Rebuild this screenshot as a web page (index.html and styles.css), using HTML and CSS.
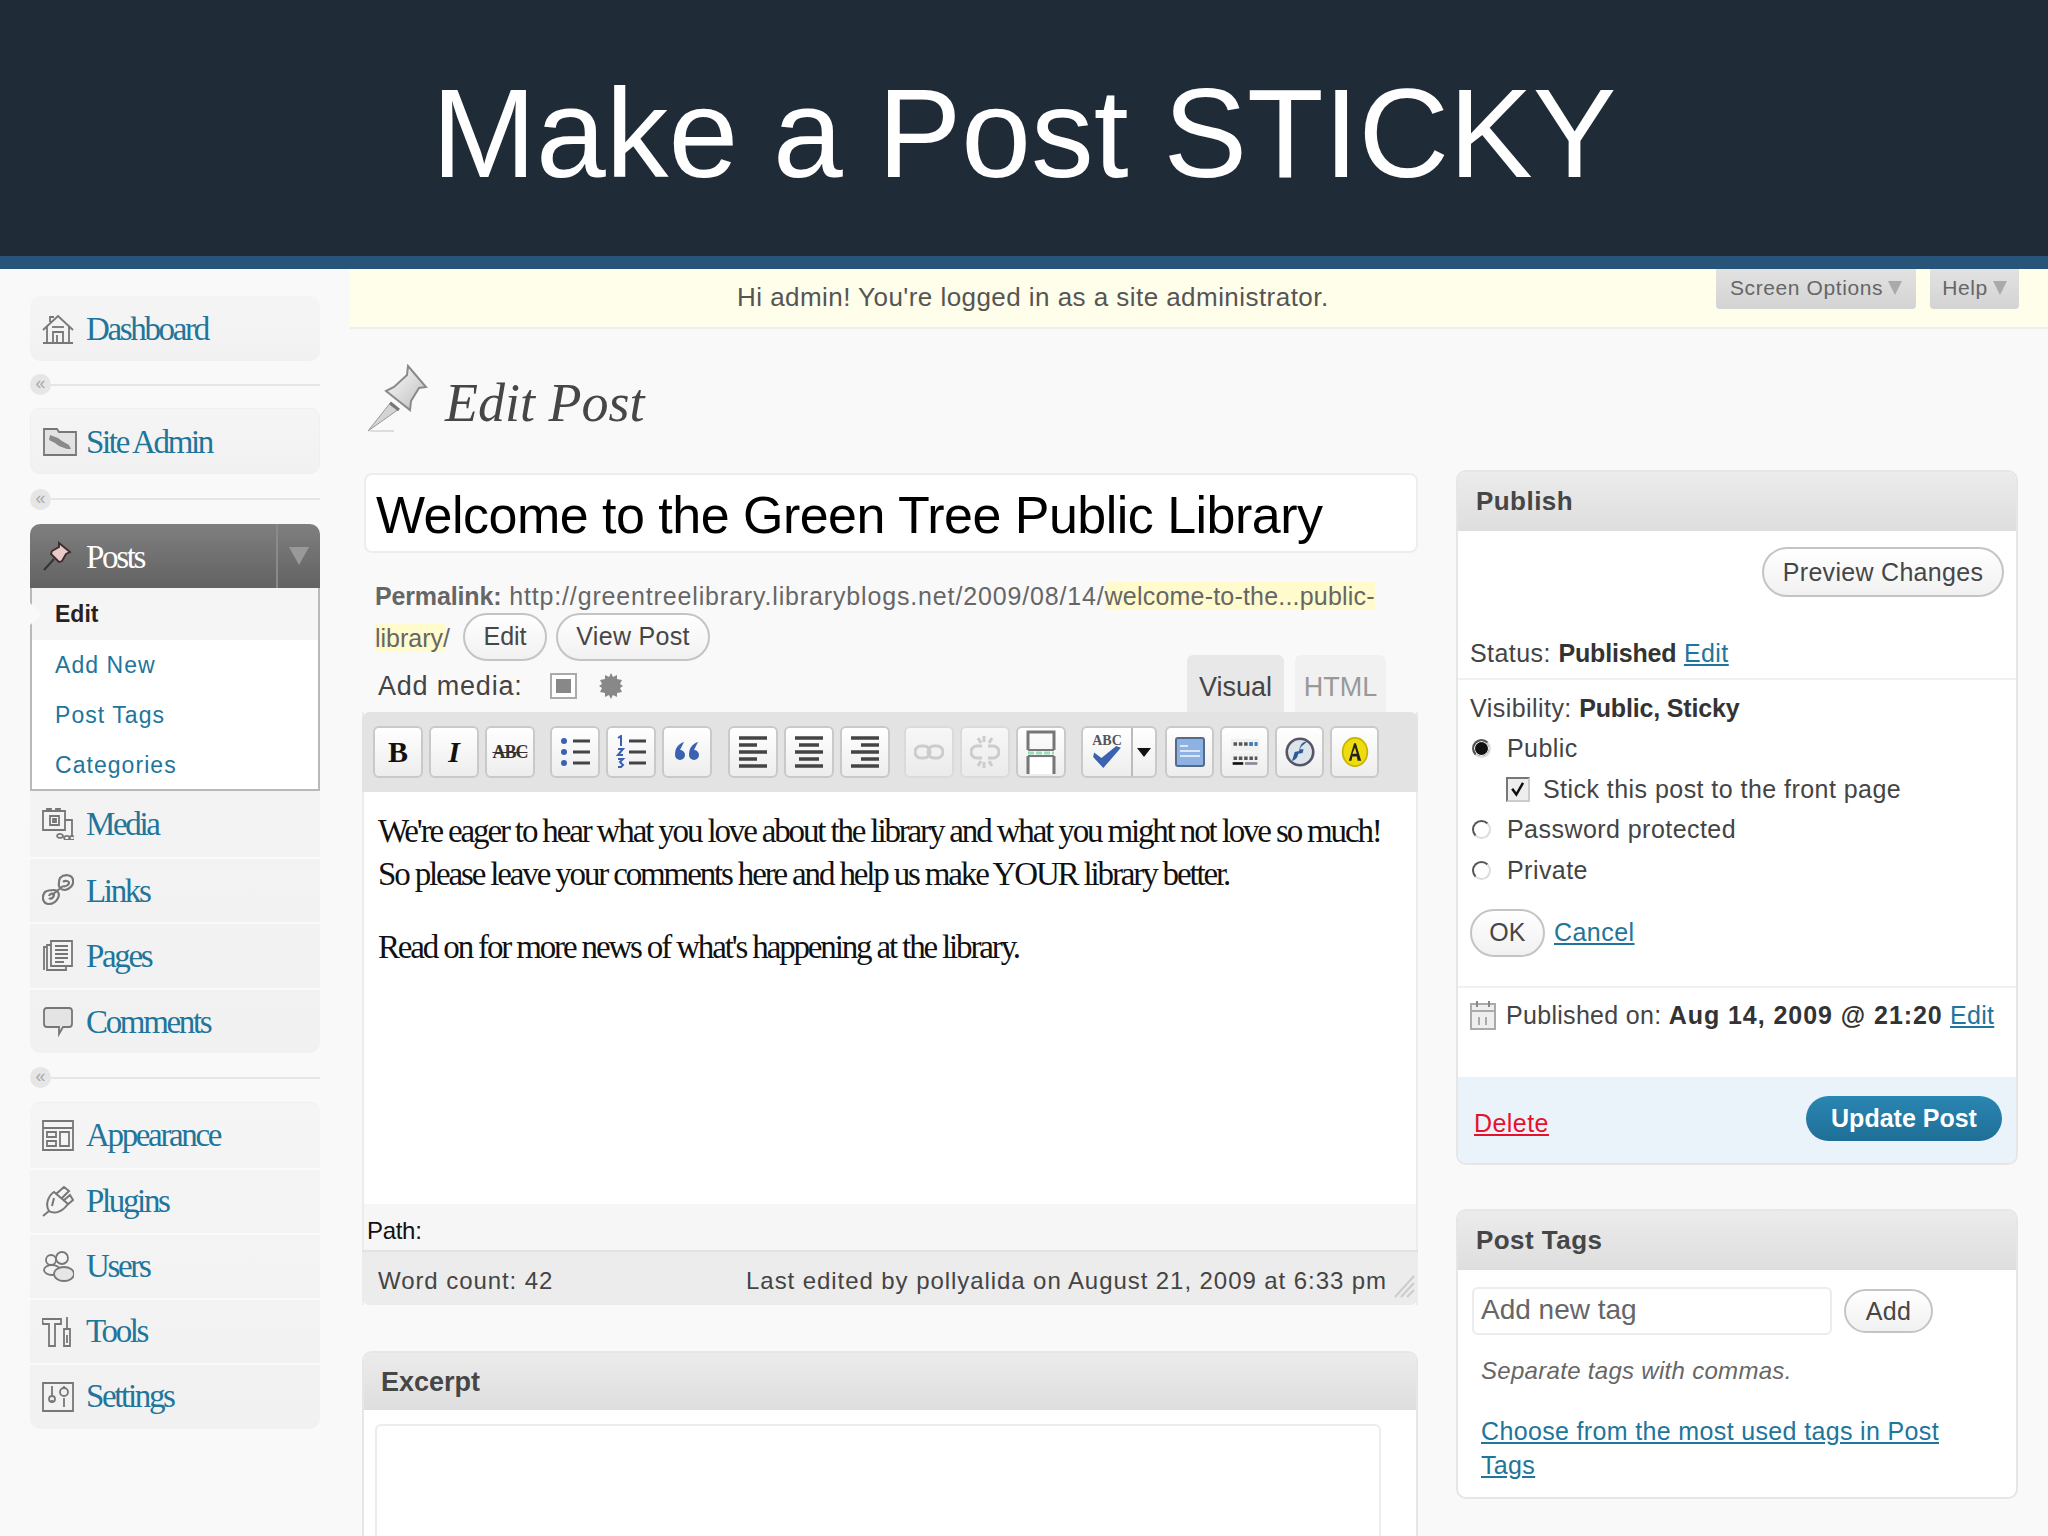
FILE: index.html
```html
<!DOCTYPE html>
<html lang="en">
<head>
<meta charset="utf-8">
<title>Make a Post STICKY</title>
<link rel="stylesheet" href="styles.css">
</head>
<body>
<div class="slide">
  <header class="slide-head"><h1>Make a Post STICKY</h1></header>
  <div class="wp">
    <nav class="side">
      <ul class="group g-dash">
        <li class="item"><svg class="ico" viewBox="0 0 32 32"><path d="M1 17 16 3l15 14M5 14v16M27 14v16M1 30h30M11 30V19h10v11M15 30V22M8 9V4h4"/><path d="M10 14h12"/></svg><a>Dashboard</a></li>
      </ul>
      <div class="sep"><span class="collapse">«</span></div>
      <ul class="group g-admin">
        <li class="item"><svg class="ico wide" viewBox="0 0 34 32"><path d="M1 4h13l2 3h17v23H1z" fill="#e2e2e2"/><path d="M7 10l8 3 4 3 7 4 2 4-4 0-8-3-4-3-6-3z" fill="#8a8a8a" stroke="none"/></svg><a>Site Admin</a></li>
      </ul>
      <div class="sep sep-b"><span class="collapse">«</span></div>
      <div class="group g-posts">
        <div class="posts-head">
          <svg class="ico" viewBox="0 0 32 32"><path d="M2 30l10-11" stroke="#333" stroke-width="2"/><path d="M17 3l11 9-4 2-4 7-3 1-8-8 1-3 7-4z" fill="#e9c9c9" stroke="#3a2a2a"/></svg>
          <a>Posts</a>
          <span class="toggle"><i class="tri"></i></span>
        </div>
        <ul class="sub">
          <li class="cur"><span class="notch"></span>Edit</li>
          <li><a>Add New</a></li>
          <li><a>Post Tags</a></li>
          <li><a>Categories</a></li>
        </ul>
        <ul class="rest">
          <li class="item"><svg class="ico" viewBox="0 0 32 32"><path d="M1 3h22v19H1zM5 3V1h4v2M14 3V1h4v2M8 8h9v9H8z"/><path d="M11 11h3v3h-3z" fill="#888"/><path d="M23 12h7v17M22 30a3 2 0 1 0 0-.1M27 30a3 2 0 1 0 0-.1M15 28a3 2 0 1 0 0-.1"/></svg><a>Media</a></li>
          <li class="item"><svg class="ico" viewBox="0 0 32 32"><path d="M3 18c-4 5-2 12 4 12 4 0 7-2 9-6 2-4 0-8-4-8-3 0-6 0-9 2zM7 22c1-3 5-3 5-1s-3 5-5 3M18 4c4-4 12-4 13 2 1 5-3 9-8 10-4 0-7-3-6-7 0-2 0-3 1-5zM21 8c2-2 6-1 6 1s-4 4-6 3M10 21l11-9" stroke-width="2.2"/></svg><a>Links</a></li>
          <li class="item"><svg class="ico" viewBox="0 0 32 32"><path d="M9 1h21v25H9z" fill="#f4f4f4"/><path d="M9 5H5v25h19v-4M5 7H2v23M13 6h13M13 10h13M13 14h13M13 18h13M13 22h9"/></svg><a>Pages</a></li>
          <li class="item"><svg class="ico" viewBox="0 0 32 32"><path d="M5 2h22q3 0 3 3v13q0 3-3 3h-6l-4 7v-7H5q-3 0-3-3V5q0-3 3-3z" fill="#e4e4e4"/></svg><a>Comments</a></li>
        </ul>
      </div>
      <div class="sep sep-c"><span class="collapse">«</span></div>
      <ul class="group g-tools">
        <li class="item"><svg class="ico" viewBox="0 0 32 32"><path d="M1 1h30v29H1zM1 8h30M5 12h9v5H5zM5 21h9v5H5zM18 12h9v14h-9z"/></svg><a>Appearance</a></li>
        <li class="item"><svg class="ico" viewBox="0 0 32 32"><path d="M1 30l6-5M7 25C3 19 6 10 12 6l14 12c-5 7-13 11-19 7zM14 8l8-7 5 4-8 8M21 15l7-6 3 5-7 6M12 12l-2 8" stroke-width="2"/></svg><a>Plugins</a></li>
        <li class="item"><svg class="ico" viewBox="0 0 32 32"><circle cx="9" cy="9" r="5"/><circle cx="20" cy="7" r="6"/><ellipse cx="10" cy="19" rx="8" ry="5"/><ellipse cx="22" cy="23" rx="10" ry="7" fill="#e6e6e6"/></svg><a>Users</a></li>
        <li class="item"><svg class="ico" viewBox="0 0 32 32"><path d="M0 3h19v5h-6v22H7V8H1zM25 1v12M22 13h6v17h-6zM25 19v8"/></svg><a>Tools</a></li>
        <li class="item"><svg class="ico" viewBox="0 0 32 32"><path d="M1 2h30v28H1zM10 5v9M22 5v3M10 19v2M22 17v9"/><circle cx="10" cy="18" r="3"/><circle cx="22" cy="11" r="4"/></svg><a>Settings</a></li>
      </ul>
    </nav>

    <main class="content">
      <div class="notice">
        <p class="notice-text">Hi admin! You're logged in as a site administrator.</p>
        <div class="meta-tabs">
          <span class="mtab mtab-opt">Screen Options<i class="tri tri-s"></i></span>
          <span class="mtab mtab-help">Help<i class="tri tri-s"></i></span>
        </div>
      </div>
      <div class="page">
        <div class="page-head">
          <svg class="big-pin" viewBox="0 0 61 68"><defs><linearGradient id="pinfill" x1="0" y1="0" x2="1" y2="1"><stop offset="0" stop-color="#fff"/><stop offset="1" stop-color="#bbb"/></linearGradient></defs><path d="M1 67 24 38l8 7z" fill="#d4d4d4" stroke="#999"/><path d="M41 2l18 21-7 1-8 13-1 9-24-19 8-4 13-12z" fill="url(#pinfill)" stroke="#8a8a8a" stroke-width="2"/><path d="M23 39l9 7" stroke="#777" stroke-width="3"/><path d="M3 67h24" stroke="#ddd" stroke-width="2"/></svg>
          <h2>Edit Post</h2>
        </div>
        <div class="columns">
          <section class="left">
            <div class="title-box">Welcome to the Green Tree Public Library</div>
            <p class="perma"><b>Permalink:</b> http://greentreelibrary.libraryblogs.net/2009/08/14/<span class="hl">welcome-to-the...public-</span></p>
            <div class="perma2"><span class="hl">library/</span><button class="btn btn-edit">Edit</button><button class="btn btn-view">View Post</button></div>
            <div class="media-row">
              <span class="add-media">Add media:</span>
              <svg class="m-ico" viewBox="0 0 27 26"><path d="M1 1h25v24H1z" fill="#fff" stroke="#aaa" stroke-width="2"/><path d="M6 6h15v14H6z" fill="#888"/></svg>
              <svg class="m-ico star" viewBox="0 0 24 26"><path d="M12 0l2 4 4-2 0 4 5 1-2 4 3 2-3 2 2 4-5 1 0 4-4-2-2 4-2-4-4 2 0-4-5-1 2-4-3-2 3-2-2-4 5-1 0-4 4 2z" fill="#888"/></svg>
              <div class="tabs"><span class="tab tab-on">Visual</span><span class="tab tab-off">HTML</span></div>
            </div>
            <div class="editor">
              <div class="toolbar">
                <div class="tgroup">
                  <span class="tb t-b">B</span><span class="tb t-i">I</span><span class="tb t-abc">ABC</span>
                </div>
                <div class="tgroup g2">
                  <span class="tb"><svg class="ti" viewBox="0 0 30 34"><path d="M13 6h17M13 17h17M13 28h17" stroke="#444" stroke-width="3"/><circle cx="4" cy="6" r="3" fill="#3b62b0"/><circle cx="4" cy="17" r="3" fill="#3b62b0"/><circle cx="4" cy="28" r="3" fill="#3b62b0"/></svg></span>
                  <span class="tb"><svg class="ti" viewBox="0 0 30 34"><path d="M13 6h17M13 17h17M13 28h17" stroke="#444" stroke-width="3"/><path d="M2 3l3-2v10M2 14h5l-5 6h5M2 24h5l-3 3 3 3-2 2H2" stroke="#3b62b0" stroke-width="2" fill="none"/></svg></span>
                  <span class="tb"><svg class="ti" viewBox="0 0 30 34"><path d="M12 7C6 9 3 13 3 20a5 5 0 1 0 5-5l4-8zM26 7c-6 2-9 6-9 13a5 5 0 1 0 5-5l4-8z" fill="#3b62b0"/></svg></span>
                </div>
                <div class="tgroup g3">
                  <span class="tb"><svg class="ti" viewBox="0 0 30 34"><path d="M1 3h28M1 10h18M1 17h28M1 24h18M1 31h28" stroke="#444" stroke-width="3.6"/></svg></span>
                  <span class="tb"><svg class="ti" viewBox="0 0 30 34"><path d="M1 3h28M5 10h20M1 17h28M5 24h20M1 31h28" stroke="#444" stroke-width="3.6"/></svg></span>
                  <span class="tb"><svg class="ti" viewBox="0 0 30 34"><path d="M1 3h28M11 10h18M1 17h28M11 24h18M1 31h28" stroke="#444" stroke-width="3.6"/></svg></span>
                </div>
                <div class="tgroup g4">
                  <span class="tb off"><svg class="ti" viewBox="0 0 30 34"><rect x="1" y="11" width="15" height="12" rx="6" fill="none" stroke="#ccc" stroke-width="3"/><rect x="14" y="11" width="15" height="12" rx="6" fill="none" stroke="#ccc" stroke-width="3"/></svg></span>
                  <span class="tb off"><svg class="ti" viewBox="0 0 30 34"><path d="M12 11H7a6 6 0 0 0 0 12h5M18 11h5a6 6 0 0 1 0 12h-5M14 1v6M8 3l3 5M22 3l-3 5M14 27v6M8 31l3-5M22 31l-3-5" fill="none" stroke="#ccc" stroke-width="3"/></svg></span>
                  <span class="tb"><svg class="ti tall" viewBox="0 0 34 44"><path d="M4 20V2h26v18M4 26v18M30 26v18" fill="none" stroke="#777" stroke-width="3"/><path d="M6 28h22v16H6z" fill="#fff" stroke="none"/><path d="M4 23h26" stroke="#9db" stroke-width="3" stroke-dasharray="6 2"/><path d="M4 26h26M4 20h26" stroke="#777" stroke-width="2"/></svg></span>
                </div>
                <div class="tgroup g5">
                  <span class="tb tb-split"><span class="sp-main"><span class="sp-abc">ABC</span><svg class="sp-check" viewBox="0 0 32 26"><path d="M2 8l8 6L26 1l5 2-19 22L1 13z" fill="#3b62b0"/></svg></span><span class="sp-drop"><i class="drop"></i></span></span>
                </div>
                <div class="tgroup g6">
                  <span class="tb"><svg class="ti" viewBox="0 0 30 30"><rect x="1" y="1" width="28" height="28" rx="2" fill="#8eb1e4" stroke="#556a88" stroke-width="2"/><path d="M5 9h8M5 14h20M5 19h20" stroke="#dbe6f6" stroke-width="2"/></svg></span>
                  <span class="tb"><svg class="ti" viewBox="0 0 34 34"><path d="M1 2h32v14H1zM1 18h32v15H1z" fill="#f1f1f1"/><path d="M4 8h4M10 8h4M16 8h4M22 8h4M28 8h3M4 24h4M10 24h4M16 24h4M22 24h4M28 24h3" stroke="#555" stroke-width="4"/><path d="M22 8h4M28 8h3" stroke="#3b82c4" stroke-width="4"/><path d="M3 30h12" stroke="#111" stroke-width="3"/><path d="M17 30h14" stroke="#889" stroke-width="3"/></svg></span>
                  <span class="tb"><svg class="ti" viewBox="0 0 34 34"><circle cx="17" cy="17" r="15" fill="#dce4ec" stroke="#556" stroke-width="3"/><path d="M25 5c-7 0-8 6-9 11l-5 1-3 10c4-1 6-3 7-8l5-1 1-4h-4c1-4 4-5 8-9z" fill="#2d5c96"/></svg></span>
                  <span class="tb"><svg class="ti" viewBox="0 0 34 34"><ellipse cx="17" cy="17" rx="14" ry="16" fill="#eedc10" stroke="#c8b400" stroke-width="2"/><path d="M10 27l6-20h2l6 20h-4l-1-5h-5l-1 5zM14 19h5l-2-7z" fill="#222"/></svg></span>
                </div>
              </div>
              <div class="ed-body">
                <p>We're eager to hear what you love about the library and what you might not love so much!<br>So please leave your comments here and help us make YOUR library better.</p>
                <p>Read on for more news of what's happening at the library.</p>
              </div>
              <div class="ed-path">Path:</div>
              <div class="ed-status">
                <span>Word count: 42</span>
                <span class="last">Last edited by pollyalida on August 21, 2009 at 6:33 pm</span>
                <svg class="grip" viewBox="0 0 22 24"><path d="M2 23 21 2M8 23 21 9M14 23l7-7" stroke="#ccc" stroke-width="2"/></svg>
              </div>
            </div>
            <div class="box excerpt">
              <h3 class="box-h">Excerpt</h3>
              <div class="ta"></div>
            </div>
          </section>

          <aside class="right">
            <div class="box publish">
              <h3 class="box-h">Publish</h3>
              <div class="prev-row"><button class="btn btn-prev">Preview Changes</button></div>
              <div class="status">Status: <b>Published</b> <a>Edit</a></div>
              <div class="vis">
                <div class="vis-line">Visibility: <b>Public, Sticky</b></div>
                <div class="vis-line radio-line"><span class="radio on"></span>Public</div>
                <div class="vis-line stick-line"><span class="check"><svg viewBox="0 0 24 24"><path d="M5 11l5 7 8-14" fill="none" stroke="#111" stroke-width="3"/></svg></span>Stick this post to the front page</div>
                <div class="vis-line radio-line"><span class="radio"></span>Password protected</div>
                <div class="vis-line radio-line"><span class="radio"></span>Private</div>
                <div class="ok-row"><button class="btn btn-ok">OK</button><a>Cancel</a></div>
              </div>
              <div class="pub-on">
                <svg class="cal" viewBox="0 0 26 30"><path d="M1 4h24v25H1z" fill="#eee" stroke="#aaa" stroke-width="2"/><path d="M1 11h24" stroke="#aaa" stroke-width="2"/><path d="M7 1v6M19 1v6" stroke="#888" stroke-width="2"/><path d="M9 17v8M16 17v8" stroke="#aaa" stroke-width="2"/></svg>
                <span>Published on: <b>Aug 14, 2009 @ 21:20</b> <a>Edit</a></span>
              </div>
              <div class="pub-foot"><a class="del">Delete</a><button class="update">Update Post</button></div>
            </div>
            <div class="box tags">
              <h3 class="box-h">Post Tags</h3>
              <div class="tag-row"><div class="tag-input">Add new tag</div><button class="btn btn-add">Add</button></div>
              <p class="tag-help">Separate tags with commas.</p>
              <p class="tag-link"><a>Choose from the most used tags in Post<br>Tags</a></p>
            </div>
          </aside>
        </div>
      </div>
    </main>
  </div>
</div>
</body>
</html>
```
FILE: styles.css
```css
* { box-sizing: border-box; }
html, body { margin: 0; padding: 0; }
body { width: 2048px; height: 1536px; overflow: hidden; background: #faf9fa; font-family: "Liberation Sans", Arial, sans-serif; }
ul { list-style: none; margin: 0; padding: 0; }
p, h1, h2, h3 { margin: 0; }
a { color: #21759b; }
button { font-family: inherit; margin: 0; padding: 0; }
.slide { width: 2048px; height: 1536px; display: flex; flex-direction: column; overflow: hidden; }
.slide-head { height: 269px; flex: none; background: #1f2b36; border-bottom: 13px solid #28547a; display: flex; align-items: center; justify-content: center; }
.slide-head h1 { font-weight: 400; font-size: 125.4px; line-height: 1; color: #fff; margin-top: 12px; }
.wp { flex: 1; display: flex; min-height: 0; }

/* sidebar */
.side { width: 350px; flex: none; padding: 27px 30px 0 30px; }
.group { background: linear-gradient(#f5f5f5, #f1f1f1); border-radius: 10px; }
.g-dash { height: 65px; }
.g-admin { height: 66px; border: 1px solid #efefef; }
.g-dash .item, .g-admin .item { height: 100%; }
.item { height: 65.6px; display: flex; align-items: center; padding-left: 12px; border-top: 2px solid #fafafa; }
.item:first-child { border-top: 0; }
.item a, .posts-head a { font-family: "Liberation Serif", serif; font-size: 33px; letter-spacing: -2.35px; margin-left: 12px; color: #21759b; padding-top: 2px; }
.ico { width: 32px; height: 32px; flex: none; fill: none; stroke: #777; stroke-width: 1.8; }
.ico.wide { width: 34px; margin-right: -3px; }
.sep { height: 47px; position: relative; display: flex; align-items: center; }
.sep::after { content: ""; flex: 1; height: 2px; background: #e6e6e6; }
.collapse { width: 21px; height: 21px; border-radius: 50%; background: #e6e6e6; color: #aaa; font-size: 18px; line-height: 18px; text-align: center; flex: none; }
.sep-b { height: 50px; }
.sep-c { height: 49px; }
.g-posts { background: none; }
.posts-head { height: 64px; border-radius: 10px 10px 0 0; background: linear-gradient(#7f7f7f, #626262); display: flex; align-items: center; padding-left: 12px; }
.posts-head .ico { stroke: #333; }
.posts-head a { color: #fff; }
.toggle { margin-left: auto; width: 44px; height: 100%; border-left: 2px solid #8a8a8a; display: flex; align-items: center; justify-content: center; }
.tri { display: inline-block; width: 0; height: 0; border-left: 10px solid transparent; border-right: 10px solid transparent; border-top: 18px solid #999; }
.sub { background: #fff; border-style: solid; border-width: 0 2px 2px; border-color: #b9b9b9; height: 203px; font-size: 23px; letter-spacing: 1.05px; }
.sub li { height: 50.3px; display: flex; align-items: center; padding-left: 23px; position: relative; }
.sub li.cur { background: #f5f5f5; height: 52px; font-weight: 700; color: #2a2020; letter-spacing: 0; }
.notch { position: absolute; left: -2px; top: 15px; border-left: 12px solid #faf9fa; border-top: 11px solid transparent; border-bottom: 11px solid transparent; }
.rest { background: linear-gradient(#f3f3f3, #f1f1f1); border-radius: 0 0 10px 10px; }
.rest .item:first-child { border-top: 0; }
.g-tools { border-top: 1px solid #efefef; height: 327px; }
.g-tools .item { height: 65px; }
.g-tools .item a { padding-top: 0; }

/* content */
.content { flex: 1; min-width: 0; display: flex; flex-direction: column; }
.notice { height: 58px; flex: none; background: #fffeea; border-bottom: 2px solid #efefea; display: flex; align-items: flex-start; padding-right: 29px; box-sizing: content-box; }
.notice-text { font-size: 26px; letter-spacing: .45px; color: #555; margin: 13px 0 0 387px; line-height: 30px; }
.meta-tabs { margin-left: auto; display: flex; gap: 14px; }
.mtab { height: 40px; padding-bottom: 2px; background: linear-gradient(#e2e2e2, #d3d3d3); border-radius: 0 0 4px 4px; font-size: 21px; letter-spacing: .6px; color: #666; display: flex; align-items: center; justify-content: center; gap: 5px; }
.mtab-opt { width: 200px; }
.mtab-help { width: 89px; }
.tri-s { border-left-width: 7px; border-right-width: 7px; border-top: 14px solid #aaa; }
.page { padding: 0 30px 0 12px; flex: 1; min-height: 0; }
.page-head { height: 141px; padding: 35px 0 0 5px; display: flex; align-items: flex-start; }
.big-pin { width: 61px; height: 68px; flex: none; }
.page-head h2 { font-family: "Liberation Serif", serif; font-style: italic; font-weight: 400; font-size: 54px; line-height: 60px; color: #464646; margin: 9px 0 0 17px; }
.columns { display: grid; grid-template-columns: 1056px 562px; column-gap: 38px; }

/* left */
.title-box { margin: 3px 0 0 2px; height: 80px; background: #fff; border: 2px solid #ededed; border-radius: 8px; font-size: 52px; letter-spacing: -.52px; line-height: 80px; padding-left: 10px; color: #000; }
.perma { margin: 28px 0 0 13px; height: 27px; line-height: 31px; font-size: 25px; color: #666; letter-spacing: .85px; white-space: nowrap; }
.perma b { letter-spacing: -.15px; }
.perma .hl { letter-spacing: .2px; }
.hl { background: #fffbcc; }
.perma2 { margin: 4px 0 0 13px; height: 49px; display: flex; align-items: center; font-size: 25px; color: #666; }
.perma2 .hl { height: 28px; line-height: 30px; width: 70px; }
.btn { height: 48px; background: linear-gradient(#fff, #f1f1f1); border: 2px solid #c4c4c4; border-radius: 24px; font-size: 25px; letter-spacing: .3px; color: #464646; }
.btn-edit { width: 84px; margin-left: 18px; letter-spacing: 0; }
.btn-view { width: 154px; margin-left: 9px; }
.media-row { height: 57px; margin-top: -6px; padding-left: 16px; display: flex; align-items: flex-start; }
.add-media { font-size: 27px; letter-spacing: .8px; color: #444; margin-top: 15px; line-height: 32px; }
.m-ico { width: 27px; height: 26px; margin: 18px 0 0 27px; flex: none; }
.m-ico.star { width: 24px; margin-left: 22px; }
.tabs { margin: 0 32px 0 auto; display: flex; gap: 11px; }
.tab { height: 57px; display: flex; align-items: center; justify-content: center; font-size: 27px; border-radius: 6px 6px 0 0; padding-top: 8px; }
.tab-on { width: 97px; background: #e8e8e8; color: #444; }
.tab-off { width: 91px; background: #f1f1f1; color: #999; }
.editor { border-left: 2px solid #ececec; border-right: 2px solid #ececec; }
.toolbar { height: 80px; background: #e3e3e3; border-radius: 8px 8px 0 0; padding: 14px 0 0 11px; display: flex; margin: 0 -2px; }
.tgroup { display: flex; gap: 6px; }
.g2 { margin-left: 15px; }
.g3 { margin-left: 16px; }
.g4 { margin-left: 14px; }
.g5 { margin-left: 15px; }
.g6 { margin-left: 8px; }
.tb { width: 50px; height: 52px; flex: none; background: linear-gradient(#fff, #ededed); border: 2px solid #c9c9c9; border-radius: 6px; display: flex; align-items: center; justify-content: center; font-family: "Liberation Serif", serif; color: #111; }
.g6 .tb { width: 49px; }
.t-b { font-weight: 700; font-size: 30px; }
.t-i { font-weight: 700; font-style: italic; font-size: 30px; }
.t-abc { font-weight: 700; font-size: 18px; letter-spacing: -1px; text-decoration: line-through; color: #333; }
.ti { width: 30px; height: 34px; flex: none; }
.ti.tall { width: 34px; height: 44px; }
.off { background: linear-gradient(#f7f7f7, #ebebeb); border-color: #dadada; }
.tb-split { width: 76px; padding: 0; justify-content: flex-start; }
.sp-main { width: 50px; height: 100%; border-right: 2px solid #bbb; position: relative; display: flex; flex-direction: column; align-items: center; justify-content: center; }
.sp-abc { font: 700 14px/12px "Liberation Serif", serif; color: #555; }
.sp-check { width: 30px; height: 24px; margin-top: -2px; }
.sp-drop { flex: 1; display: flex; justify-content: center; }
.drop { width: 0; height: 0; border-left: 7px solid transparent; border-right: 7px solid transparent; border-top: 9px solid #111; }
.ed-body { height: 412px; background: #fff; padding: 18px 0 0 14px; font-family: "Liberation Serif", serif; font-size: 33px; line-height: 43px; letter-spacing: -2.15px; color: #111; white-space: nowrap; overflow: hidden; }
.ed-body p + p { margin-top: 30px; }
.ed-path { height: 46px; background: #f6f6f7; padding-left: 3px; font-size: 24px; line-height: 54px; letter-spacing: -.3px; color: #111; }
.ed-status { height: 55px; margin: 0 -2px; background: #ececec; border-top: 2px solid #e2e2e2; border-radius: 0 0 8px 8px; padding: 4px 3px 0 16px; font-size: 24px; letter-spacing: .93px; color: #444; display: flex; align-items: center; }
.last { margin-left: auto; }
.grip { width: 22px; height: 24px; margin: 10px 0 0 6px; flex: none; }
.box { background: #fff; border: 2px solid #e6e6e6; border-radius: 10px; overflow: hidden; }
.box-h { height: 60px; margin: -2px -2px 0; background: linear-gradient(#ececec, #dedede); font-size: 26px; line-height: 62px; padding-left: 20px; color: #464646; }
.excerpt { margin-top: 46px; height: 400px; }
.excerpt .box-h { height: 59px; font-size: 27px; padding-left: 19px; }
.ta { margin: 14px 0 0 11px; width: 1006px; height: 300px; border: 2px solid #ececec; border-radius: 6px; background: #fff; }

/* right */
.right { display: flex; flex-direction: column; gap: 44px; font-size: 25px; color: #444; letter-spacing: .45px; }
.right .box-h { height: 61px; }
.right a { text-decoration: underline; }
.prev-row { display: flex; justify-content: flex-end; padding: 16px 12px 0 0; }
.btn-prev { width: 242px; height: 50px; border-radius: 25px; }
.status { height: 83px; padding: 41px 0 0 12px; line-height: 30px; border-bottom: 2px solid #f0f0f0; }
.right b { color: #333; letter-spacing: -.15px; }
.vis { padding: 8px 0 0 12px; height: 308px; border-bottom: 2px solid #f0f0f0; }
.vis-line { height: 40.5px; display: flex; align-items: center; white-space: pre; }
.radio { width: 19px; height: 19px; border-radius: 50%; border: 2px solid #555; border-right-color: #ddd; border-bottom-color: #ddd; background: #fff; margin: 0 16px 0 2px; flex: none; }
.radio.on { background: #111; box-shadow: inset 0 0 0 1px #fff; }
.stick-line { padding-left: 36px; }
.check { width: 24px; height: 25px; border: 2px solid #777; border-right-color: #ccc; border-bottom-color: #ccc; background: #eee; margin-right: 13px; display: flex; flex: none; }
.ok-row { margin-top: 18px; display: flex; align-items: center; gap: 9px; }
.btn-ok { width: 75px; height: 48px; }
.pub-on { height: 89px; padding: 12px 0 0 12px; display: flex; align-items: flex-start; line-height: 30px; white-space: pre; letter-spacing: .3px; }
.right .pub-on b { letter-spacing: .95px; }
.cal { width: 26px; height: 30px; margin-right: 10px; flex: none; }
.pub-foot { height: 86px; background: #eaf2fa; padding: 19px 14px 0 16px; display: flex; justify-content: space-between; align-items: flex-start; }
.right .del { color: #e8112d; margin-top: 10px; line-height: 34px; }
.update { width: 196px; height: 45px; border: 0; border-radius: 23px; background: linear-gradient(#2a86b2, #1f6f96); color: #fff; font-size: 25px; font-weight: 700; }
.tags { height: 290px; }
.tag-row { display: flex; align-items: center; padding: 17px 0 0 14px; }
.tag-input { width: 360px; height: 48px; border: 2px solid #ececec; border-radius: 6px; background: #fff; font-size: 28px; letter-spacing: 0; line-height: 42px; padding-left: 7px; color: #666; }
.btn-add { width: 89px; height: 44px; margin-left: 12px; }
.tag-help { margin: 21px 0 0 23px; font-style: italic; color: #666; line-height: 30px; font-size: 24px; letter-spacing: .3px; }
.tag-link { margin: 28px 0 0 23px; line-height: 34px; letter-spacing: .35px; }
```
